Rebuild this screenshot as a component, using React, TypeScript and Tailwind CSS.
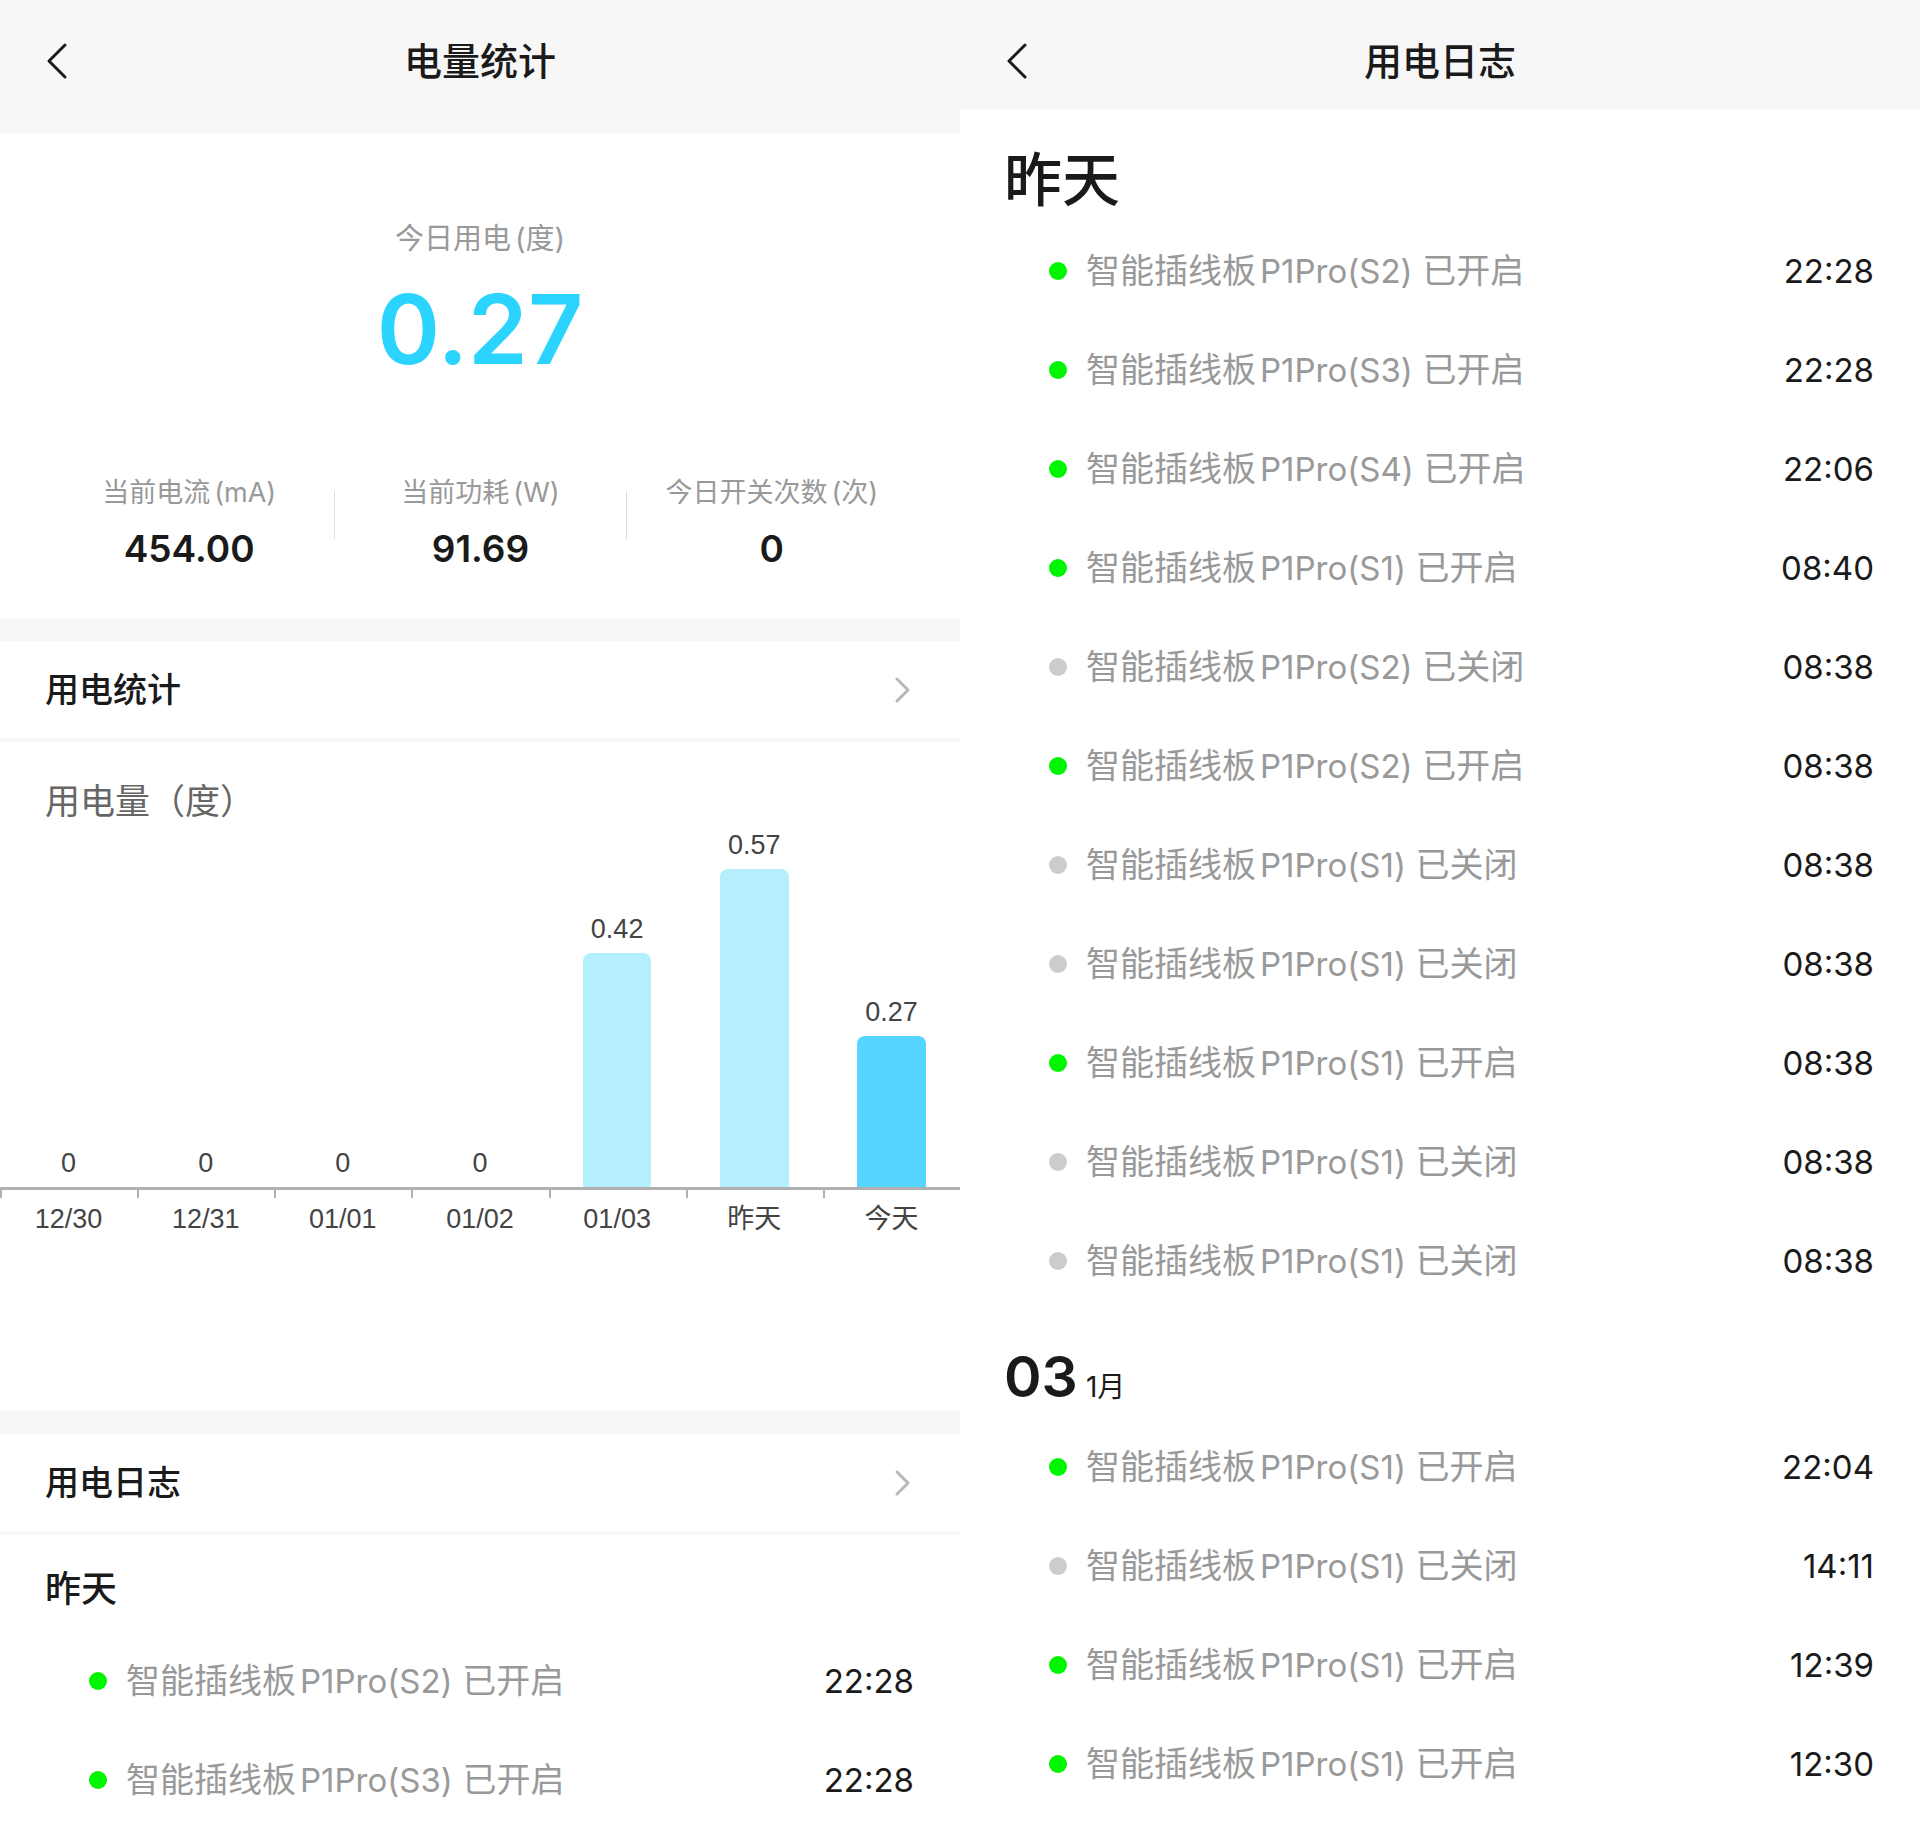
import React from "react";

type LogEntry = { socket: string; on: boolean; time: string };

const yesterdayLog: LogEntry[] = [
  { socket: "S2", on: true, time: "22:28" },
  { socket: "S3", on: true, time: "22:28" },
  { socket: "S4", on: true, time: "22:06" },
  { socket: "S1", on: true, time: "08:40" },
  { socket: "S2", on: false, time: "08:38" },
  { socket: "S2", on: true, time: "08:38" },
  { socket: "S1", on: false, time: "08:38" },
  { socket: "S1", on: false, time: "08:38" },
  { socket: "S1", on: true, time: "08:38" },
  { socket: "S1", on: false, time: "08:38" },
  { socket: "S1", on: false, time: "08:38" },
];

const thirdLog: LogEntry[] = [
  { socket: "S1", on: true, time: "22:04" },
  { socket: "S1", on: false, time: "14:11" },
  { socket: "S1", on: true, time: "12:39" },
  { socket: "S1", on: true, time: "12:30" },
];

const stats = [
  { label: "当前电流", unit: "(mA)", value: "454.00" },
  { label: "当前功耗", unit: "(W)", value: "91.69" },
  { label: "今日开关次数", unit: "(次)", value: "0" },
];

const usage = [
  { day: "12/30", value: 0 },
  { day: "12/31", value: 0 },
  { day: "01/01", value: 0 },
  { day: "01/02", value: 0 },
  { day: "01/03", value: 0.42 },
  { day: "昨天", value: 0.57 },
  { day: "今天", value: 0.27 },
];

const PIXELS_PER_UNIT = 558;

function NavBar({ title }: { title: string }) {
  return (
    <header className="grid h-[110px] grid-cols-[1fr_auto_1fr] items-center bg-[#f7f7f7] px-11 pt-3">
      <button type="button" aria-label="返回" className="w-6 justify-self-start">
        <svg viewBox="0 0 24 38" className="h-[38px] w-6" fill="none" stroke="#1a1a1a" strokeWidth="3" strokeLinecap="round" strokeLinejoin="round">
          <path d="M21 3 L5 19 L21 35" />
        </svg>
      </button>
      <h1 className="text-[38px] leading-[48px] font-medium text-[#1a1a1a]">{title}</h1>
    </header>
  );
}

function SectionLink({ title }: { title: string }) {
  return (
    <a href="#" className="flex h-[101px] items-center justify-between border-b-4 border-[#f7f7f7] pr-12 pl-[45px]">
      <h2 className="text-[34px] leading-[48px] font-medium text-[#1a1a1a]">{title}</h2>
      <svg viewBox="0 0 18 26" className="h-[26px] w-[18px]" fill="none" stroke="#b8b8b8" strokeWidth="3" strokeLinecap="round" strokeLinejoin="round">
        <path d="M3 2 L14 13 L3 24" />
      </svg>
    </a>
  );
}

function LogList({ entries }: { entries: LogEntry[] }) {
  return (
    <ul>
      {entries.map((entry, i) => (
        <li key={i} className="flex h-[99px] items-center pr-[46px] pl-[89px] text-[34px] leading-[48px]">
          <span className={entry.on ? "size-[18px] rounded-full bg-[#00f500]" : "size-[18px] rounded-full bg-[#cccccc]"} />
          <span className="ml-[19px] flex-1 text-[#999999]">
            智能插线板<span className="ml-1 text-[33px]">P1Pro({entry.socket})</span> {entry.on ? "已开启" : "已关闭"}
          </span>
          <time className="text-[33px] text-[#1a1a1a]">{entry.time}</time>
        </li>
      ))}
    </ul>
  );
}

function UsageChart() {
  return (
    <section className="pt-[39px] pb-[176px]">
      <h3 className="px-[45px] text-[35px] leading-10 text-[#666666]">用电量（度）</h3>
      <div className="mt-2 grid grid-cols-7 font-['Liberation_Sans','Noto_Sans_CJK_SC',sans-serif] text-[27px] leading-8 text-[#444444]">
        {usage.map((item) => (
          <div key={item.day} className="flex flex-col items-center justify-end">
            <span className="mb-2">{item.value}</span>
            <div
              className={item.day === "今天" ? "w-1/2 rounded-t-lg bg-[#55d5ff]" : "w-1/2 rounded-t-lg bg-[#b5effd]"}
              style={{ height: item.value * PIXELS_PER_UNIT }}
            />
          </div>
        ))}
        {usage.map((item) => (
          <div key={item.day} className="border-t-3 border-[#b0b0b0] text-center">
            <div className="h-2 border-l-2 border-[#b0b0b0]" />
            <div className="pt-[5px]">{item.day}</div>
          </div>
        ))}
      </div>
    </section>
  );
}

function StatisticsScreen() {
  return (
    <main className="bg-white">
      <NavBar title="电量统计" />
      <section className="border-y-[23px] border-[#f7f7f7] pt-[86px] pb-[47px]">
        <div className="text-center">
          <p className="text-[29px] leading-10 text-[#999999]">
            今日用电<span className="ml-1">(度)</span>
          </p>
          <p className="mt-5 text-[96px] leading-[100px] font-semibold text-[#2ad4ff]">0.27</p>
        </div>
        <dl className="mt-24 grid grid-cols-3 px-[43px]">
          {stats.map((stat, i) => (
            <div key={stat.label} className="flex">
              <div className={i === 0 ? "mt-4 h-12 w-px" : "mt-4 h-12 w-px bg-[#dddddd]"} />
              <div className="flex-1 text-center">
                <dt className="text-[27px] leading-9 whitespace-nowrap text-[#999999]">
                  {stat.label}
                  <span className="ml-1">{stat.unit}</span>
                </dt>
                <dd className="mt-4 text-[37px] leading-[44px] font-semibold text-[#1a1a1a]">{stat.value}</dd>
              </div>
            </div>
          ))}
        </dl>
      </section>
      <SectionLink title="用电统计" />
      <UsageChart />
      <div className="border-t-[23px] border-[#f7f7f7]">
        <SectionLink title="用电日志" />
      </div>
      <section className="pt-[30px]">
        <h3 className="mb-[18px] px-[45px] text-[36px] leading-[48px] font-medium text-[#1a1a1a]">昨天</h3>
        <LogList entries={yesterdayLog.slice(0, 2)} />
      </section>
    </main>
  );
}

function LogScreen() {
  return (
    <main className="bg-white">
      <NavBar title="用电日志" />
      <section className="pt-10">
        <h2 className="px-11 pb-[11px] text-[58px] leading-[60px] font-medium text-[#1a1a1a]">昨天</h2>
        <LogList entries={yesterdayLog} />
      </section>
      <section className="pt-[37px]">
        <h2 className="px-11 text-[57px] leading-[60px] font-semibold text-[#1a1a1a]">
          03<small className="ml-2 text-[28px] font-normal">1月</small>
        </h2>
        <LogList entries={thirdLog} />
      </section>
    </main>
  );
}

export default function App() {
  return (
    <div lang="zh-CN" className="grid grid-cols-2 overflow-hidden bg-white font-[Inter,'Noto_Sans_CJK_SC',sans-serif]">
      <StatisticsScreen />
      <LogScreen />
    </div>
  );
}
